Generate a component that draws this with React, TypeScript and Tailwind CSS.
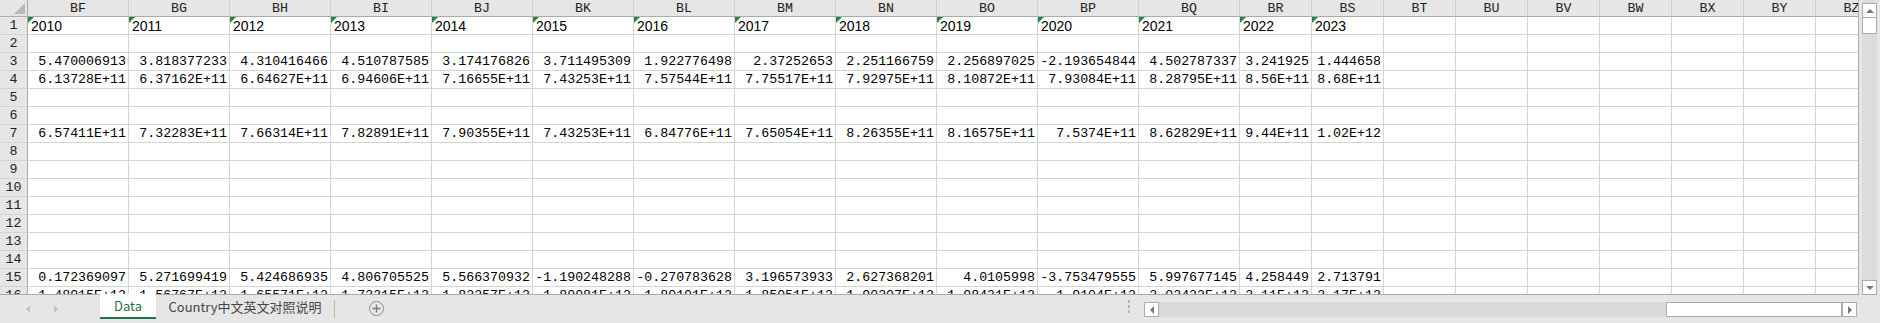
import React from "react";

const cols = ["BF", "BG", "BH", "BI", "BJ", "BK", "BL", "BM", "BN", "BO", "BP", "BQ", "BR", "BS", "BT", "BU", "BV", "BW", "BX", "BY", "BZ"];

const years = ["2010", "2011", "2012", "2013", "2014", "2015", "2016", "2017", "2018", "2019", "2020", "2021", "2022", "2023"];

const data: Record<number, string[]> = {
     3: ["5.470006913", "3.818377233", "4.310416466", "4.510787585", "3.174176826", "3.711495309", "1.922776498", "2.37252653", "2.251166759", "2.256897025", "-2.193654844", "4.502787337", "3.241925", "1.444658"],
     4: ["6.13728E+11", "6.37162E+11", "6.64627E+11", "6.94606E+11", "7.16655E+11", "7.43253E+11", "7.57544E+11", "7.75517E+11", "7.92975E+11", "8.10872E+11", "7.93084E+11", "8.28795E+11", "8.56E+11", "8.68E+11"],
     7: ["6.57411E+11", "7.32283E+11", "7.66314E+11", "7.82891E+11", "7.90355E+11", "7.43253E+11", "6.84776E+11", "7.65054E+11", "8.26355E+11", "8.16575E+11", "7.5374E+11", "8.62829E+11", "9.44E+11", "1.02E+12"],
     15: ["0.172369097", "5.271699419", "5.424686935", "4.806705525", "5.566370932", "-1.190248288", "-0.270783628", "3.196573933", "2.627368201", "4.0105998", "-3.753479555", "5.997677145", "4.258449", "2.713791"],
     16: ["1.48915E+12", "1.56767E+12", "1.65571E+12", "1.73315E+12", "1.82257E+12", "1.80081E+12", "1.80101E+12", "1.85051E+12", "1.90207E+12", "1.98431E+12", "1.9104E+12", "2.02422E+12", "2.11E+12", "2.17E+12"],
};

const rows = Array.from({ length: 16 }, (_, i) => i + 1);

function colWidth(i: number) {
     return i < 12 ? "w-[101px]" : "w-[72px]";
}

function HeaderRow() {
     return (
          <div className="flex h-[17px] shrink-0 border-b border-[#ababab] bg-[#e6e6e6]">
               <div className="relative w-[28px] shrink-0 border-r border-[#ababab]">
                    <div className="absolute bottom-[2px] right-[2px] h-0 w-0 border-b-[11px] border-l-[11px] border-b-[#b9b9b9] border-l-transparent" />
               </div>
               {cols.map((c, i) => (
                    <div key={c} className={`${colWidth(i)} shrink-0 border-r border-[#cfcfcf] text-center font-['Liberation_Mono',monospace] text-[13.3px] leading-[17px] text-[#222]`}>
                         {c}
                    </div>
               ))}
          </div>
     );
}

function Row({ n }: { n: number }) {
     const vals = data[n];
     return (
          <div className="flex h-[18px] shrink-0">
               <div className="w-[28px] shrink-0 border-b border-r border-b-[#d4d4d4] border-r-[#ababab] bg-[#e6e6e6] text-center font-['Liberation_Mono',monospace] text-[13.3px] leading-[18px] text-[#222]">
                    {n}
               </div>
               {cols.map((c, i) => {
                    if (n === 1 && i < years.length) {
                         return (
                              <div key={c} className={`${colWidth(i)} relative shrink-0 border-b border-r border-[#d4d4d4] pl-[3px] pt-[1px] font-['Liberation_Sans',sans-serif] text-[14px] leading-[17px] text-black`}>
                                   <div className="absolute left-0 top-0 h-0 w-0 border-r-[6px] border-t-[6px] border-r-transparent border-t-[#1e8a3c]" />
                                   {years[i]}
                              </div>
                         );
                    }
                    const v = vals && i < vals.length ? vals[i] : "";
                    return (
                         <div key={c} className={`${colWidth(i)} shrink-0 overflow-visible whitespace-nowrap border-b border-r border-[#d4d4d4] pr-[2px] text-right font-['Liberation_Mono',monospace] text-[13.3px] leading-[18px] text-black`}>
                              {v}
                         </div>
                    );
               })}
          </div>
     );
}

function ScrollBox({ dir }: { dir: "up" | "down" | "left" | "right" }) {
     return (
          <div className="flex h-[15px] w-[15px] shrink-0 items-center justify-center border border-[#ababab] bg-white">
               {dir === "up" && <div className="h-0 w-0 border-x-[4px] border-b-[4px] border-x-transparent border-b-[#777]" />}
               {dir === "down" && <div className="h-0 w-0 border-x-[4px] border-t-[4px] border-x-transparent border-t-[#777]" />}
               {dir === "left" && <div className="h-0 w-0 border-y-[4px] border-r-[4px] border-y-transparent border-r-[#777]" />}
               {dir === "right" && <div className="h-0 w-0 border-y-[4px] border-l-[4px] border-y-transparent border-l-[#777]" />}
          </div>
     );
}

export default function App() {
     return (
          <div className="flex h-[323px] w-[1880px] flex-col overflow-hidden bg-[#e6e6e6]">
               <div className="flex h-[295px] shrink-0">
                    <div className="flex w-[1859px] shrink-0 flex-col overflow-hidden border-b border-r border-[#ababab] bg-white">
                         <HeaderRow />
                         {rows.map((n) => (
                              <Row key={n} n={n} />
                         ))}
                    </div>
                    <div className="ml-[3px] flex h-[295px] w-[15px] flex-col bg-[#dcdcdc] pt-[3px]">
                         <ScrollBox dir="up" />
                         <div className="h-[16px] w-[15px] border-x border-b border-[#ababab] bg-white" />
                         <div className="flex-1" />
                         <ScrollBox dir="down" />
                    </div>
               </div>
               <div className="flex h-[28px] items-start">
                    <div className="flex w-[100px] shrink-0 items-center pl-[26px] pt-[10px]">
                         <div className="h-0 w-0 border-y-[4px] border-r-[4px] border-y-transparent border-r-[#c4c4c4]" />
                         <div className="ml-[24px] h-0 w-0 border-y-[4px] border-l-[4px] border-y-transparent border-l-[#c4c4c4]" />
                    </div>
                    <div className="-mt-px flex h-[25px] w-[56px] shrink-0 items-center justify-center border-b-2 border-[#217346] bg-white font-['Noto_Sans_CJK_SC','Noto_Sans',sans-serif] text-[13px] text-[#217346]">
                         Data
                    </div>
                    <div className="flex h-[24px] w-[178px] shrink-0 items-center justify-center font-['Noto_Sans_CJK_SC','Noto_Sans',sans-serif] text-[13px] text-[#444]">
                         Country中文英文对照说明
                    </div>
                    <div className="mt-[5px] h-[18px] w-px shrink-0 bg-[#b5b5b5]" />
                    <div className="ml-[34px] mt-[6px] flex h-[15px] w-[15px] shrink-0 items-center justify-center rounded-full border border-[#8a8a8a] text-[14px] leading-none text-[#8a8a8a]">
                         <svg width="9" height="9" viewBox="0 0 9 9">
                              <path d="M4.5 0.5v8M0.5 4.5h8" stroke="#7a7a7a" strokeWidth="1.4" />
                         </svg>
                    </div>
                    <div className="ml-[744px] mt-[5px] flex w-[2px] shrink-0 flex-col gap-[2px]">
                         <div className="h-[3px] w-[2px] bg-[#b5b5b5]" />
                         <div className="h-[3px] w-[2px] bg-[#b5b5b5]" />
                         <div className="h-[3px] w-[2px] bg-[#b5b5b5]" />
                    </div>
                    <div className="ml-[14px] mt-[7px] flex h-[15px] shrink-0">
                         <ScrollBox dir="left" />
                         <div className="h-[15px] w-[507px] bg-[#dadada]" />
                         <div className="h-[15px] w-[176px] border border-[#ababab] bg-white" />
                         <ScrollBox dir="right" />
                    </div>
               </div>
          </div>
     );
}
